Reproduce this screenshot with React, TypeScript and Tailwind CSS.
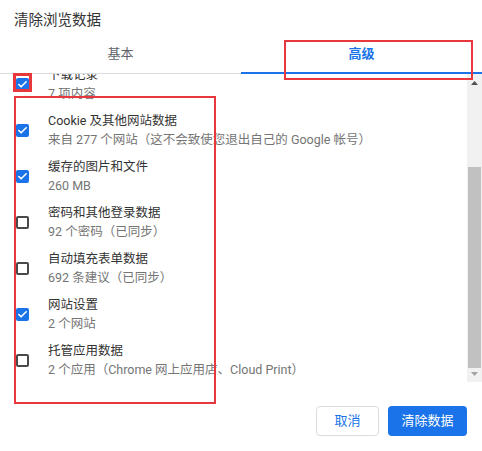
import React from "react";

type Item = { title: string; sub: string; checked: boolean };

const items: Item[] = [
  { title: "下载记录", sub: "7 项内容", checked: true },
  { title: "Cookie 及其他网站数据", sub: "来自 277 个网站（这不会致使您退出自己的 Google 帐号）", checked: true },
  { title: "缓存的图片和文件", sub: "260 MB", checked: true },
  { title: "密码和其他登录数据", sub: "92 个密码（已同步）", checked: false },
  { title: "自动填充表单数据", sub: "692 条建议（已同步）", checked: false },
  { title: "网站设置", sub: "2 个网站", checked: true },
  { title: "托管应用数据", sub: "2 个应用（Chrome 网上应用店、Cloud Print）", checked: false },
];

const font = { fontFamily: 'Roboto, "Noto Sans CJK SC", sans-serif' };

const Checkbox = ({ checked }: { checked: boolean }) =>
  checked ? (
    <div className="w-[13px] h-[13px] rounded-[2px] bg-[#1a73e8] flex items-center justify-center shrink-0">
      <svg width="11" height="11" viewBox="0 0 24 24" fill="none">
        <path d="M20 6L9 17l-5-5" stroke="white" strokeWidth="3.5" strokeLinecap="round" strokeLinejoin="round" />
      </svg>
    </div>
  ) : (
    <div className="w-[13px] h-[13px] rounded-[2px] border-2 border-[#4a4a4a] shrink-0" />
  );

const App = () => {
  return (
    <div className="relative w-[482px] h-[451px] bg-white flex flex-col overflow-hidden" style={font}>
      <h1 className="pt-[11px] pl-[14px] text-[14.5px] leading-[20px] text-[#333]">清除浏览数据</h1>

      <div className="mt-[3px] h-[40px] flex border-b border-[#dadce0]">
        <div className="flex-1 flex items-center justify-center text-[13px] text-[#5f6368]">基本</div>
        <div className="flex-1 relative flex items-center justify-center text-[13px] font-bold text-[#1a73e8]">
          高级
          <div className="absolute left-0 right-0 bottom-[-1px] h-[2px] bg-[#1a73e8]" />
        </div>
      </div>

      <div className="h-[308px] flex">
        <div className="flex-1 overflow-hidden">
          <div className="mt-[-13px]">
            {items.map((it) => (
              <div key={it.title} className="h-[46px] flex items-center pl-[16px]">
                <Checkbox checked={it.checked} />
                <div className="ml-[19px] flex flex-col">
                  <span className="text-[12.5px] leading-[18px] text-[#333]">{it.title}</span>
                  <span className="text-[12.5px] leading-[19px] text-[#757575] whitespace-nowrap">{it.sub}</span>
                </div>
              </div>
            ))}
          </div>
        </div>
        <div className="w-[15px] bg-[#f1f1f1] flex flex-col items-center">
          <div className="h-[17px] flex items-center justify-center">
            <svg width="7" height="4" viewBox="0 0 7 4"><path d="M0 4L3.5 0L7 4Z" fill="#505050" /></svg>
          </div>
          <div className="mt-[76px] w-[13px] h-[201px] bg-[#c1c1c1]" />
          <div className="h-[12px] flex items-center justify-center">
            <svg width="7" height="4" viewBox="0 0 7 4"><path d="M0 0L3.5 4L7 0Z" fill="#a3a3a3" /></svg>
          </div>
        </div>
      </div>

      <div className="flex justify-end gap-[9px] pt-[24px] pr-[15px]">
        <button className="w-[63px] h-[30px] rounded-[4px] border border-[#dadce0] bg-white text-[13px] text-[#1a73e8]">取消</button>
        <button className="w-[79px] h-[30px] rounded-[4px] bg-[#1a73e8] text-[13px] text-white">清除数据</button>
      </div>

      {/* red annotation boxes */}
      <div className="absolute left-[284px] top-[40px] w-[189px] h-[40px] border-2 border-[#e8383d]" />
      <div className="absolute left-[13px] top-[73px] w-[19px] h-[19px] border-[3px] border-[#e8383d]" />
      <div className="absolute left-[14px] top-[96px] w-[202px] h-[308px] border-2 border-[#e8383d]" />
    </div>
  );
};

export default App;
